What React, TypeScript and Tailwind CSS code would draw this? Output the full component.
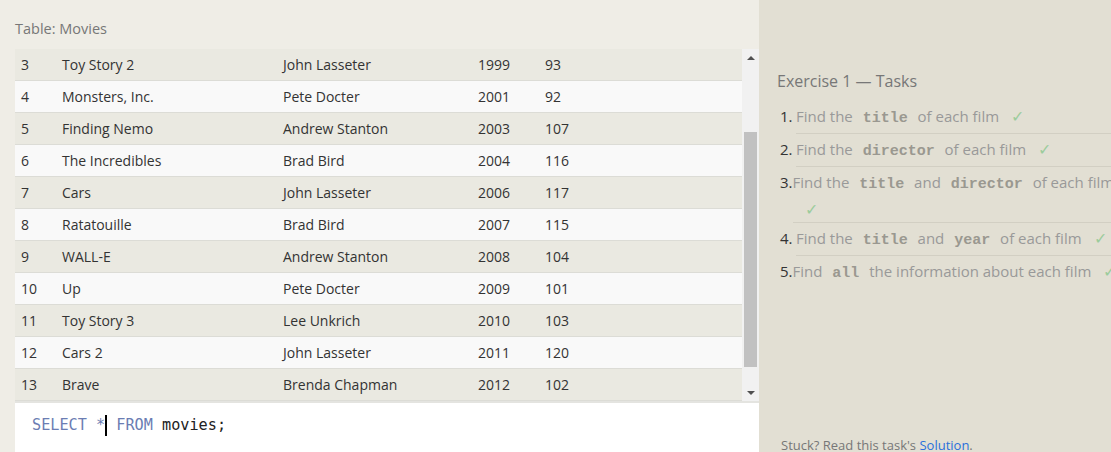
import React from "react"

const movies = [
  [3, "Toy Story 2", "John Lasseter", 1999, 93],
  [4, "Monsters, Inc.", "Pete Docter", 2001, 92],
  [5, "Finding Nemo", "Andrew Stanton", 2003, 107],
  [6, "The Incredibles", "Brad Bird", 2004, 116],
  [7, "Cars", "John Lasseter", 2006, 117],
  [8, "Ratatouille", "Brad Bird", 2007, 115],
  [9, "WALL-E", "Andrew Stanton", 2008, 104],
  [10, "Up", "Pete Docter", 2009, 101],
  [11, "Toy Story 3", "Lee Unkrich", 2010, 103],
  [12, "Cars 2", "John Lasseter", 2011, 120],
  [13, "Brave", "Brenda Chapman", 2012, 102],
]

function Code({ children }: { children: React.ReactNode }) {
  return (
    <code className="px-[6px] font-bold text-[#9a9890] text-[15px] font-['Liberation_Mono',monospace]">
      {children}
    </code>
  )
}

function Check() {
  return <span className="ml-3 text-[#9ccc9c] text-[16px]">✓</span>
}

export default function App() {
  return (
    <div className="w-[1111px] h-[452px] overflow-hidden bg-[#efede6] font-['Open_Sans',sans-serif] flex">
      {/* Left: table + editor */}
      <div className="flex flex-col w-[759px] shrink-0">
        <div className="h-[49px] pl-[15px] pt-[18px] text-[14.5px] text-[#777]">Table: Movies</div>
        <div className="flex ml-[15px] h-[352px]">
          <div className="flex-1 flex flex-col">
            {movies.map((m, i) => (
              <div
                key={i}
                className={`h-[32px] flex items-center text-[14px] text-[#333] border-b border-[#dcdcd6] ${
                  i % 2 === 0 ? "bg-[#eae9e1]" : "bg-[#f9f9f9]"
                }`}
              >
                <div className="w-[47px] pl-[6px]">{m[0]}</div>
                <div className="w-[221px]">{m[1]}</div>
                <div className="w-[195px]">{m[2]}</div>
                <div className="w-[67px]">{m[3]}</div>
                <div>{m[4]}</div>
              </div>
            ))}
          </div>
          {/* scrollbar */}
          <div className="w-[17px] bg-[#f1f1f1] flex flex-col">
            <div className="h-[17px] flex items-center justify-center">
              <div className="w-0 h-0 border-l-[4px] border-r-[4px] border-b-[4px] border-l-transparent border-r-transparent border-b-[#505050]" />
            </div>
            <div className="h-[66px]" />
            <div className="h-[235px] mx-[2px] bg-[#c1c1c1]" />
            <div className="flex-1" />
            <div className="h-[17px] flex items-center justify-center">
              <div className="w-0 h-0 border-l-[4px] border-r-[4px] border-t-[4px] border-l-transparent border-r-transparent border-t-[#505050]" />
            </div>
          </div>
        </div>
        <div className="ml-[15px] flex-1 bg-white border-t-2 border-[#e4e4e0] pl-[17px] pt-[11px] text-[15.2px] font-['DejaVu_Sans_Mono',monospace] flex items-start">
          <span className="text-[#6b7db3]">SELECT</span>
          <span className="text-[#6b7db3]">&nbsp;*</span>
          <span className="w-[2px] h-[21px] bg-black mt-[1px]" />
          <span className="text-[#6b7db3]">&nbsp;FROM</span>
          <span className="text-[#222]">&nbsp;movies;</span>
        </div>
      </div>

      {/* Right: tasks */}
      <div className="flex-1 bg-[#e2dfd3] flex flex-col pl-[18px] pt-[69px] text-[15px] text-[#999] whitespace-nowrap overflow-hidden">
        <div className="text-[16px] text-[#777] mb-[8px]">Exercise 1 — Tasks</div>
        <ol className="flex flex-col">
          {[
            <>Find the <Code>title</Code> of each film</>,
            <>Find the <Code>director</Code> of each film</>,
            <>Find the <Code>title</Code> and <Code>director</Code> of each film</>,
            <>Find the <Code>title</Code> and <Code>year</Code> of each film</>,
            <>Find <Code>all</Code> the information about each film</>,
          ].map((t, i) => (
            <li key={i} className="flex leading-[24px]">
              <span className="w-[19px] pl-[3px] pt-[3px] text-[#333]">{i + 1}.</span>
              <div
                className={`flex-1 border-b border-[#d2cfc3] pt-[3px] ${i === 4 ? "border-b-0" : ""} ${
                  i === 2 ? "h-[56px]" : "h-[33px]"
                }`}
              >
                {i === 2 ? (
                  <div className="flex flex-col">
                    <span>{t}</span>
                    <span><Check /></span>
                  </div>
                ) : (
                  <span>
                    {t}
                    <Check />
                  </span>
                )}
              </div>
            </li>
          ))}
        </ol>
        <div className="flex-1" />
        <div className="text-[13px] text-[#777] mb-[-3px] pl-[4px]">
          Stuck? Read this task's <span className="text-[#2a6fdb]">Solution</span>.
        </div>
      </div>
    </div>
  )
}
